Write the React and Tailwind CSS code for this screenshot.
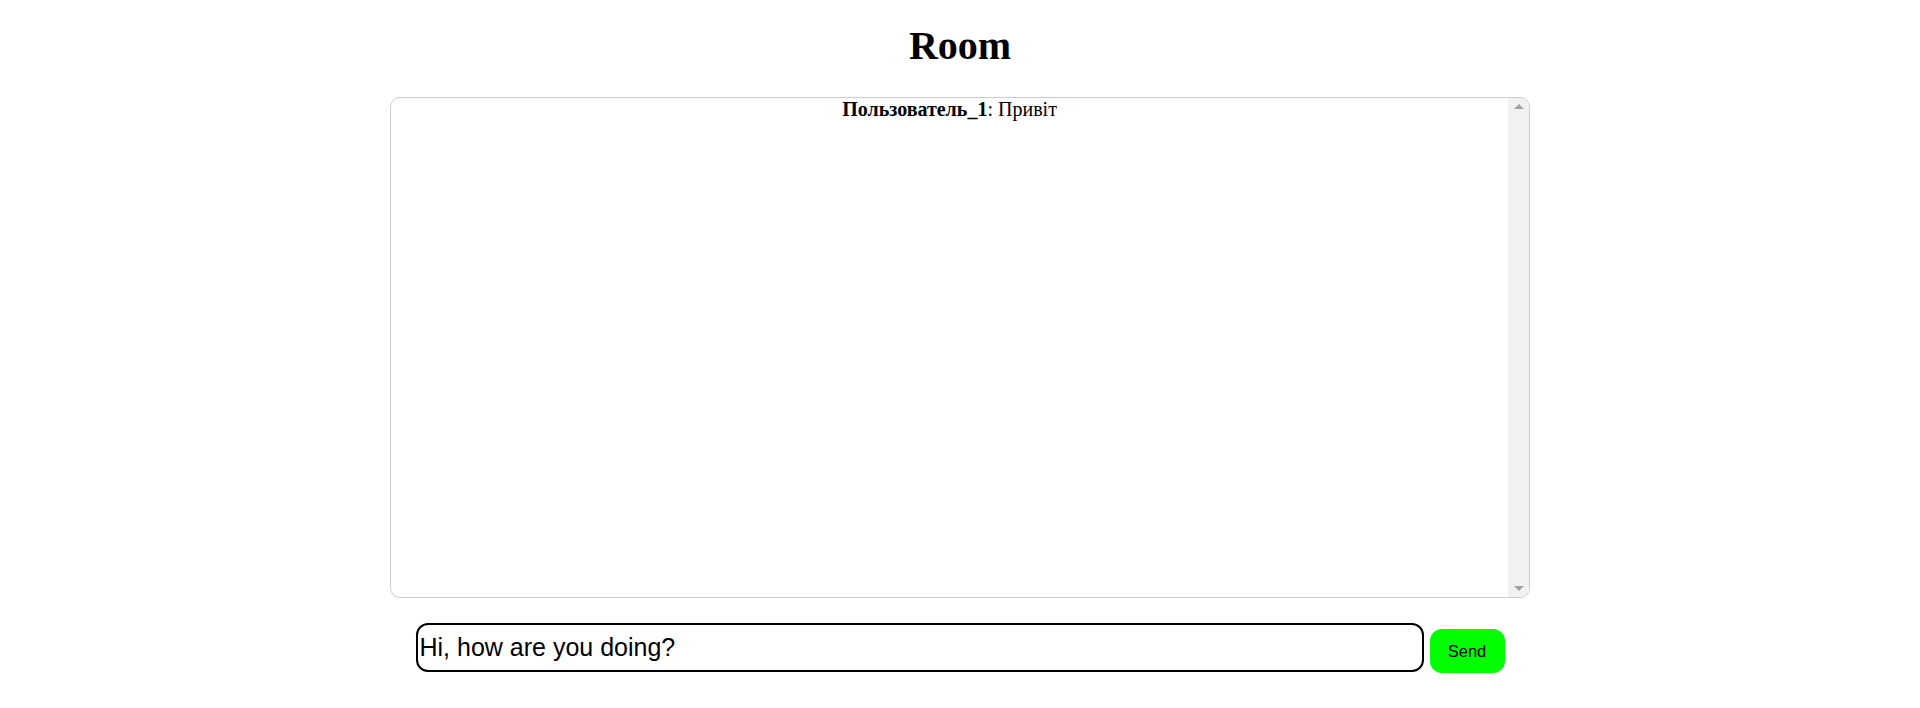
import React from "react";

export default function App() {
  return (
    <div className="min-h-[708px] bg-white pt-[24px] font-['Liberation_Serif','Times_New_Roman',serif] text-black">
      <h1 className="text-center text-[40px] font-bold leading-[44px]">Room</h1>
      <div className="mx-auto mt-[29px] flex h-[501px] w-[1140px] overflow-hidden rounded-[10px] border border-[#cccccc]">
        <div className="flex-1 text-center text-[20px] leading-[23px]">
          <b>Пользователь_1</b>: Привіт
        </div>
        <div className="flex w-[21px] flex-col items-center justify-between bg-[#f1f1f1] py-[6px]">
          <div className="h-0 w-0 border-x-[5px] border-b-[5px] border-x-transparent border-b-[#a3a3a3]" />
          <div className="h-0 w-0 border-x-[5px] border-t-[5px] border-x-transparent border-t-[#a3a3a3]" />
        </div>
      </div>
      <div className="mx-auto mt-[25px] flex w-[1089px] items-end gap-[6px]">
        <input
          type="text"
          defaultValue="Hi, how are you doing?"
          className="h-[49px] flex-1 rounded-[12px] border-2 border-black px-[2px] font-['Liberation_Sans',Arial,sans-serif] text-[25px] text-black outline-none"
        />
        <button className="mb-[-1px] h-[44px] w-[75px] rounded-[12px] bg-[#00ff00] font-['Liberation_Sans',Arial,sans-serif] text-[16.5px] text-black">
          Send
        </button>
      </div>
    </div>
  );
}
